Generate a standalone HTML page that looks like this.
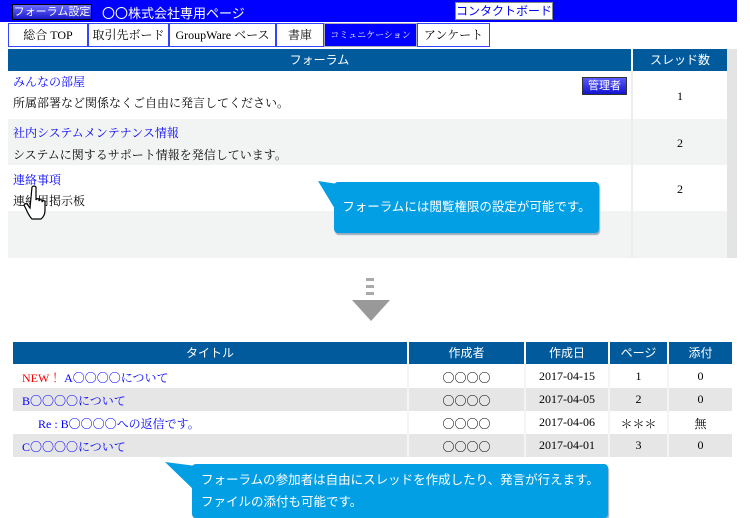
<!DOCTYPE html>
<html><head><meta charset="utf-8"><style>
*{margin:0;padding:0;box-sizing:border-box}
body{width:750px;height:517px;background:#fff;position:relative;overflow:hidden;font-family:"Liberation Serif","Noto Serif CJK SC","Noto Sans CJK JP",serif;font-size:12px;color:#000}
.a{position:absolute}
.top{left:0;top:0;width:737px;height:22px;background:#0000ff}
.btn1{left:12px;top:4px;width:80px;height:16px;background:linear-gradient(#6b6bff,#1a1acc);border:1px solid #000;color:#fff;font-size:11px;text-align:center;line-height:14px;font-family:"Liberation Sans","Noto Sans CJK JP",sans-serif}
.ttl{left:102px;top:3px;color:#fff;font-size:13px;font-family:"Liberation Sans","Noto Sans CJK JP",sans-serif}
.ct{left:455px;top:2px;width:98px;height:18px;background:#fff;border:1px solid #888;color:#00f;font-size:12px;text-align:center;line-height:16px;font-family:"Liberation Sans","Noto Sans CJK JP",sans-serif}
.tab{top:23px;height:24px;border:1px solid #3344ff;background:#fff;color:#000;text-align:center;line-height:22px;font-size:12px}
.hd{background:#005a9c;color:#fff;text-align:center;font-family:"Liberation Sans","Noto Sans CJK JP",sans-serif;font-size:12px}
.bl{color:#0000ff}
.cell{text-align:center}
.bub{background:#039fe4;color:#fff;border-radius:4px;font-family:"Liberation Sans","Noto Sans CJK JP",sans-serif;font-size:12.5px;box-shadow:1px 2px 1px #9ab}
</style></head><body>
<div class="a top"></div>
<div class="a btn1">フォーラム設定</div>
<div class="a ttl">〇〇株式会社専用ページ</div>
<div class="a ct">コンタクトボード</div>
<div class="a tab" style="left:8px;width:80px">総合 TOP</div>
<div class="a tab" style="left:88px;width:81px">取引先ボード</div>
<div class="a tab" style="left:169px;width:107px">GroupWare ベース</div>
<div class="a tab" style="left:276px;width:48px">書庫</div>
<div class="a tab" style="left:324px;width:93px;background:#0000ff;color:#fff;font-size:9px;border-color:#aab">コミュニケーション</div>
<div class="a tab" style="left:417px;width:73px">アンケート</div>

<div class="a hd" style="left:8px;top:49px;width:623px;height:22px;line-height:22px">フォーラム</div>
<div class="a hd" style="left:633px;top:49px;width:94px;height:22px;line-height:22px">スレッド数</div>
<div class="a" style="left:727px;top:49px;width:10px;height:209px;background:#e4e4e4"></div>
<div class="a" style="left:8px;top:119px;width:719px;height:46px;background:#f2f3f3"></div>
<div class="a" style="left:8px;top:211px;width:719px;height:47px;background:#f2f3f3"></div>
<div class="a" style="left:631px;top:71px;width:2px;height:187px;background:#eceeee"></div>

<div class="a bl" style="left:13px;top:73px;font-size:12px">みんなの部屋</div>
<div class="a" style="left:13px;top:94px">所属部署など関係なくご自由に発言してください。</div>
<div class="a" style="left:582px;top:77px;width:45px;height:18px;background:linear-gradient(#5a5aff,#1414d0);border:1px solid #333;color:#fff;font-size:11px;text-align:center;line-height:16px;font-family:'Liberation Sans','Noto Sans CJK JP',sans-serif">管理者</div>
<div class="a" style="left:633px;top:89px;width:94px;text-align:center">1</div>
<div class="a bl" style="left:13px;top:124px">社内システムメンテナンス情報</div>
<div class="a" style="left:13px;top:146px">システムに関するサポート情報を発信しています。</div>
<div class="a" style="left:633px;top:136px;width:94px;text-align:center">2</div>
<div class="a bl" style="left:13px;top:171px">連絡事項</div>
<div class="a" style="left:13px;top:192px">連絡用掲示板</div>
<div class="a" style="left:633px;top:182px;width:94px;text-align:center">2</div>
<svg class="a" style="left:22px;top:185px" width="36" height="40" viewBox="0 0 36 40"><path d="M10 2 q2-2 4 0 v13 q1-2 3-1 v2 q1-2 3-1 v2 q1-2 3-1 v9 q0 6-4 9 h-9 q-3-3-6-10 l-2-4 q1-2 3-1 l3 4 z" fill="#fff" stroke="#000" stroke-width="1.2"/></svg>

<svg class="a" style="left:0;top:0" width="750" height="517"><polygon points="318,181 338,184 338,214" fill="#039fe4"/><polygon points="165,462 196,466 196,492" fill="#039fe4"/></svg>
<div class="a bub" style="left:334px;top:182px;width:265px;height:51px;line-height:51px;text-align:center">フォーラムには閲覧権限の設定が可能です。</div>

<div class="a" style="left:366px;top:278px;width:8px;height:3px;background:#aaa"></div>
<div class="a" style="left:366px;top:285px;width:8px;height:3px;background:#aaa"></div>
<div class="a" style="left:366px;top:292px;width:8px;height:3px;background:#aaa"></div>
<div class="a" style="left:352px;top:300px;width:0;height:0;border-left:19px solid transparent;border-right:19px solid transparent;border-top:21px solid #999"></div>

<div class="a hd" style="left:13px;top:342px;width:394px;height:22px;line-height:22px">タイトル</div>
<div class="a hd" style="left:409px;top:342px;width:115px;height:22px;line-height:22px">作成者</div>
<div class="a hd" style="left:526px;top:342px;width:82px;height:22px;line-height:22px">作成日</div>
<div class="a hd" style="left:610px;top:342px;width:57px;height:22px;line-height:22px">ページ</div>
<div class="a hd" style="left:669px;top:342px;width:63px;height:22px;line-height:22px">添付</div>
<div class="a" style="left:13px;top:388px;width:719px;height:23px;background:#e6e6e6"></div>
<div class="a" style="left:13px;top:434px;width:719px;height:23px;background:#e6e6e6"></div>
<div class="a" style="left:407px;top:364px;width:2px;height:93px;background:#f4f4f4"></div>
<div class="a" style="left:524px;top:364px;width:2px;height:93px;background:#f4f4f4"></div>
<div class="a" style="left:608px;top:364px;width:2px;height:93px;background:#f4f4f4"></div>
<div class="a" style="left:667px;top:364px;width:2px;height:93px;background:#f4f4f4"></div>

<div class="a" style="left:22px;top:369px"><span style="color:#f00">NEW ！</span><span class="bl">A〇〇〇〇について</span></div>
<div class="a bl" style="left:22px;top:392px">B〇〇〇〇について</div>
<div class="a bl" style="left:38px;top:415px">Re : B〇〇〇〇への返信です。</div>
<div class="a bl" style="left:22px;top:438px">C〇〇〇〇について</div>
<div class="a cell" style="left:409px;top:369px;width:115px">〇〇〇〇</div>
<div class="a cell" style="left:409px;top:392px;width:115px">〇〇〇〇</div>
<div class="a cell" style="left:409px;top:415px;width:115px">〇〇〇〇</div>
<div class="a cell" style="left:409px;top:438px;width:115px">〇〇〇〇</div>
<div class="a cell" style="left:526px;top:369px;width:82px">2017-04-15</div>
<div class="a cell" style="left:526px;top:392px;width:82px">2017-04-05</div>
<div class="a cell" style="left:526px;top:415px;width:82px">2017-04-06</div>
<div class="a cell" style="left:526px;top:438px;width:82px">2017-04-01</div>
<div class="a cell" style="left:610px;top:369px;width:57px">1</div>
<div class="a cell" style="left:610px;top:392px;width:57px">2</div>
<div class="a cell" style="left:610px;top:415px;width:57px">＊＊＊</div>
<div class="a cell" style="left:610px;top:438px;width:57px">3</div>
<div class="a cell" style="left:669px;top:369px;width:63px">0</div>
<div class="a cell" style="left:669px;top:392px;width:63px">0</div>
<div class="a cell" style="left:669px;top:415px;width:63px">無</div>
<div class="a cell" style="left:669px;top:438px;width:63px">0</div>

<div class="a bub" style="left:192px;top:464px;width:416px;height:54px;padding:5px 0 0 9px;line-height:22px">フォーラムの参加者は自由にスレッドを作成したり、発言が行えます。<br>ファイルの添付も可能です。</div>
</body></html>
